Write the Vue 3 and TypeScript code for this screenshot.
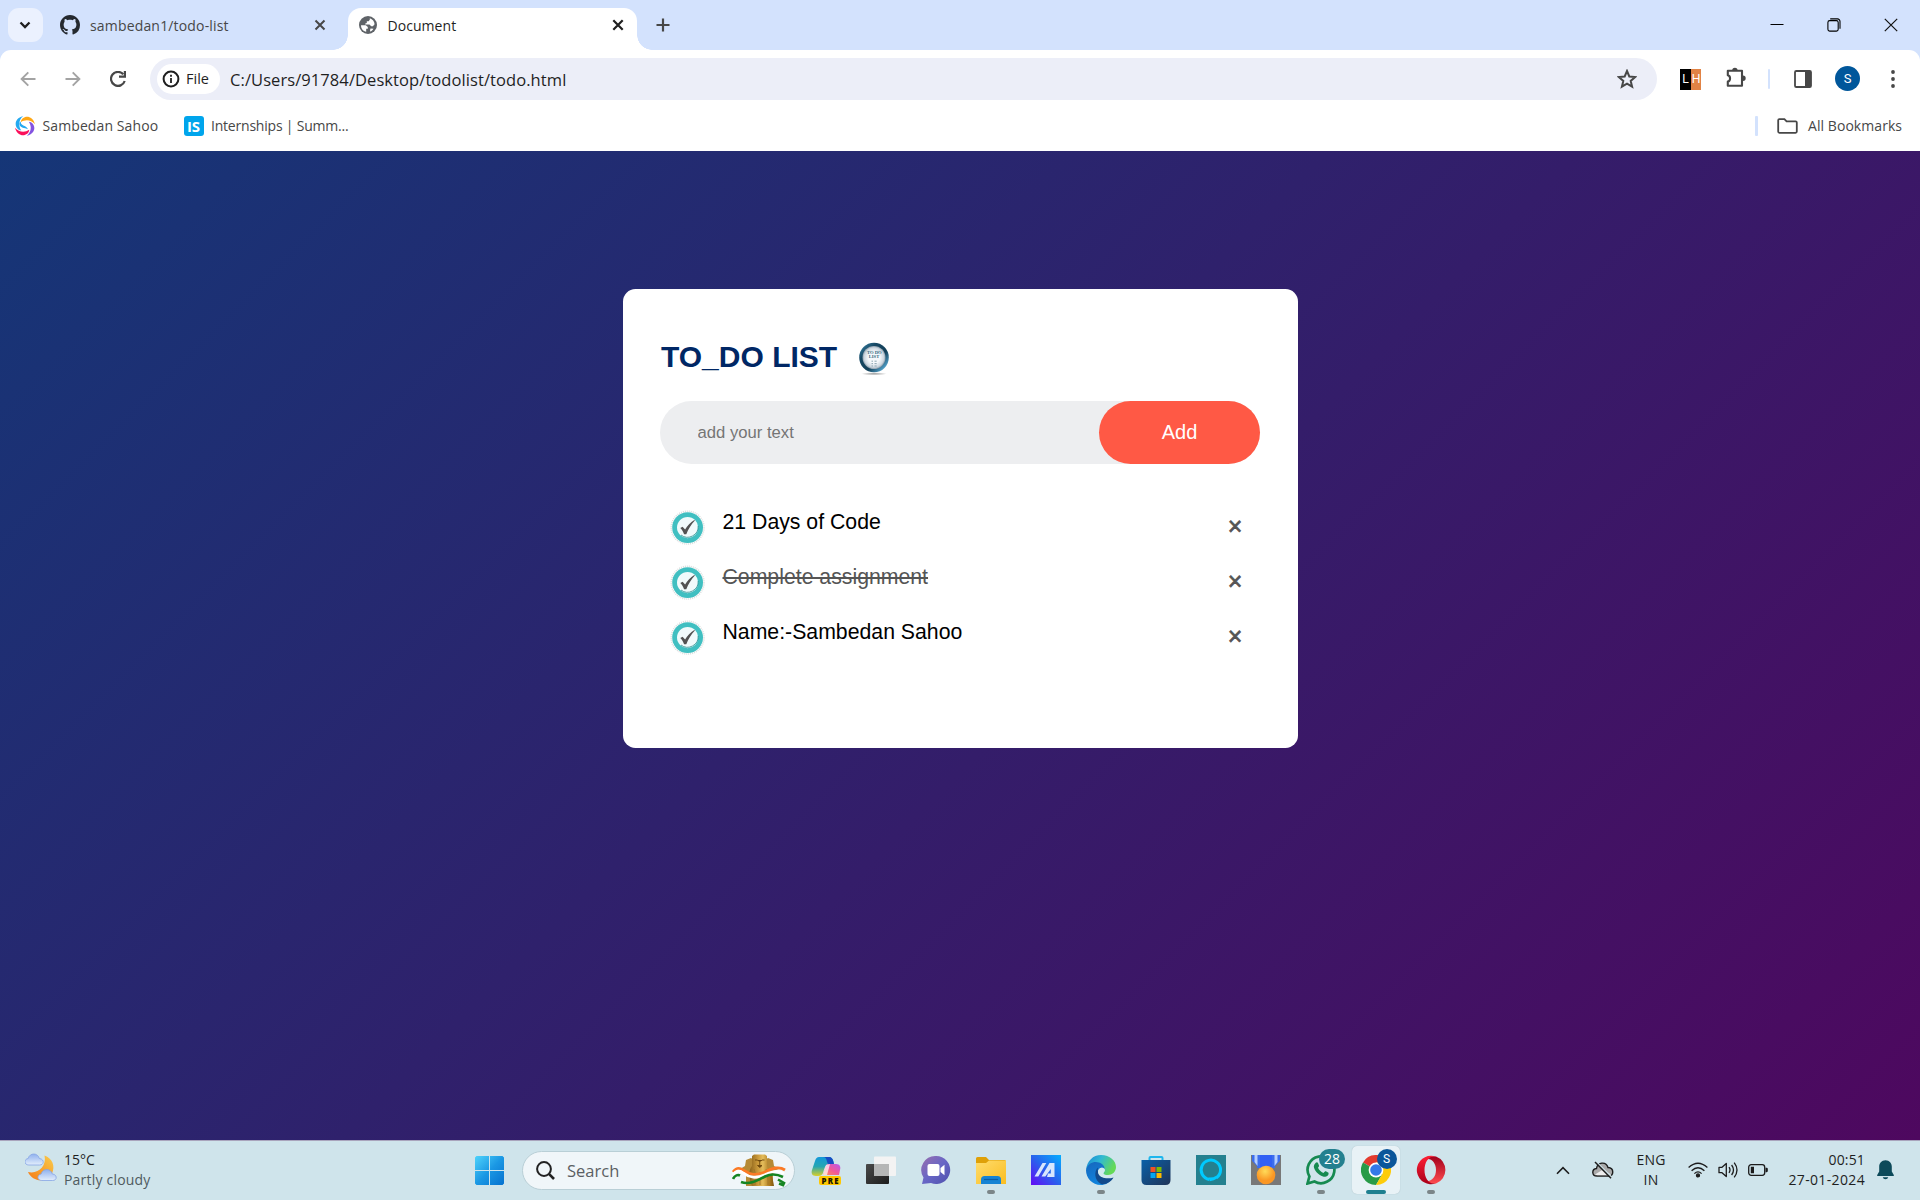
<script setup lang="ts">
import { ref } from 'vue'

interface Task {
  text: string
  done: boolean
}

const draft = ref('')
const tasks = ref<Task[]>([
  { text: '21 Days of Code', done: false },
  { text: 'Complete assignment', done: true },
  { text: 'Name:-Sambedan Sahoo', done: false },
])

function addTask() {
  const text = draft.value.trim()
  if (!text) return
  tasks.value.push({ text, done: false })
  draft.value = ''
}

function removeTask(index: number) {
  tasks.value.splice(index, 1)
}
</script>

<template>
  <div class="screen">
    <div class="tabstrip">
      <div class="tab-search">
        <svg width="12" height="8" viewBox="0 0 12 8"><path d="M1.500 1.500 6 6l4.500-4.500" fill="none" stroke="#1f1f1f" stroke-width="2.300" /></svg>
      </div>
      <div class="tab tab-idle">
        <svg class="fav" width="20" height="20" viewBox="0 0 16 16" fill="#24292f"><path d="M8 0C3.580 0 0 3.580 0 8c0 3.540 2.290 6.530 5.470 7.590.4.070.55-.17.55-.38 0-.19-.01-.82-.01-1.490-2.010.37-2.530-.49-2.690-.94-.09-.23-.48-.94-.82-1.130-.28-.15-.68-.52-.01-.53.63-.01 1.080.58 1.230.82.72 1.210 1.870.87 2.330.66.070-.52.28-.87.51-1.070-1.780-.2-3.640-.89-3.640-3.950 0-.87.31-1.590.82-2.150-.08-.2-.36-1.020.080-2.120 0 0 .67-.21 2.200.82.64-.18 1.320-.27 2-.27s1.360.090 2 .27c1.530-1.040 2.200-.82 2.200-.82.44 1.100.16 1.920.080 2.120.51.56.82 1.270.82 2.150 0 3.070-1.870 3.750-3.650 3.950.29.25.54.73.54 1.480 0 1.070-.01 1.930-.01 2.200 0 .21.15.46.55.38A8.010 8.010 0 0 0 16 8c0-4.420-3.580-8-8-8z" /></svg>
        <span class="tab-title idle-title">sambedan1/todo-list</span>
        <svg width="12" height="12" viewBox="0 0 12 12"><path d="m1.500 1.500 9 9m0-9-9 9" stroke="#474747" stroke-width="2" /></svg>
      </div>
      <div class="tab tab-active">
        <svg class="fav" width="18" height="18" viewBox="0 0 18 18"><circle cx="9" cy="9" r="9" fill="#5f6368" /><path d="M2 9.200h4.800l2 1.900v1.600H7.200v3.100C4.300 15.200 2 12.800 2 9.200zM10.800 2.300v1.500L9.600 5.200H7.800v1.900l-1.500.4v1h4.200l1.700 1.700h1.700l1.700-1.900c-.2-2.800-2-5-4.800-6zM11.500 12.500l3 .2c-.8 1.400-1.900 2.300-3.400 2.900v-1.500z" fill="#fff" /></svg>
        <span class="tab-title">Document</span>
        <svg width="12" height="12" viewBox="0 0 12 12"><path d="m1.300 1.300 9.400 9.400m0-9.400-9.400 9.400" stroke="#1f1f1f" stroke-width="2.200" /></svg>
      </div>
      <svg class="new-tab" width="14" height="14" viewBox="0 0 14 14"><path d="M7 .5v13M.5 7h13" stroke="#474747" stroke-width="2.200" /></svg>
      <div class="window-controls">
        <svg width="14" height="14" viewBox="0 0 14 14"><path d="M.5 6.500h13" stroke="#000" stroke-width="1" /></svg>
        <svg width="14" height="14" viewBox="0 0 14 14" fill="none" stroke="#000" stroke-width="1.100"><rect x=".9" y="2.600" width="10.300" height="10.500" rx="1.800" /><path d="M3.200.9h7.300a2.500 2.500 0 0 1 2.500 2.500v7.400" /></svg>
        <svg width="14" height="14" viewBox="0 0 14 14"><path d="m.8.800 12.400 12.400M13.200.8.8 13.200" stroke="#111" stroke-width="1.200" /></svg>
      </div>
    </div>

    <div class="toolbar">
      <svg class="nav" width="16" height="16" viewBox="0 0 16 16" fill="none" stroke="#a3a3a3" stroke-width="1.900"><path d="M15.500 8H2M8.300 1.300 1.600 8l6.700 6.700" /></svg>
      <svg class="nav" width="16" height="16" viewBox="0 0 16 16" fill="none" stroke="#a3a3a3" stroke-width="1.900"><path d="M.5 8H14M7.700 1.300 14.400 8l-6.700 6.700" /></svg>
      <svg class="nav" width="16" height="16" viewBox="0 0 16 16"><path d="M13.300 3.300A7 7 0 1 0 14.700 10" fill="none" stroke="#474747" stroke-width="2.200" /><path d="M9 6.800h7V0h-2.200v4.600H9z" fill="#474747" /></svg>
      <div class="omnibox">
        <div class="chip">
          <svg width="18" height="18" viewBox="0 0 18 18"><circle cx="9" cy="9" r="7.400" fill="none" stroke="#1f1f1f" stroke-width="2" /><path d="M9 8v5M9 4.800v2" stroke="#1f1f1f" stroke-width="1.800" /></svg>
          <span>File</span>
        </div>
        <span class="url">C:/Users/91784/Desktop/todolist/todo.html</span>
        <svg class="star" width="20" height="20" viewBox="0 0 20 20"><path d="m10 2 2.300 5.500 5.900.5-4.500 3.900 1.400 5.800-5.100-3.100-5.100 3.100 1.400-5.800L1.800 8l5.900-.5z" fill="none" stroke="#474747" stroke-width="2" /></svg>
      </div>
      <div class="ext"><span class="ext-l">L</span><span class="ext-h">H</span></div>
      <svg class="puzzle" width="22" height="22" viewBox="0 0 22 22"><path d="M2.800 3.800H17v15H2.800v-4.300c3-.6 3-5.600 0-6.200z" fill="none" stroke="#474747" stroke-width="2.100" stroke-linejoin="round" /><path d="M7.200 3.400a2.700 2.700 0 0 1 5.400 0zM18 8.600a2.700 2.700 0 0 1 0 5.400z" fill="#474747" /></svg>
      <i class="divider"></i>
      <svg class="panel" width="18" height="18" viewBox="0 0 18 18"><rect x="1" y="1" width="16" height="16" rx="1.300" fill="none" stroke="#474747" stroke-width="1.800" /><path d="M11 1h6v16h-6z" fill="#474747" /></svg>
      <span class="avatar">S</span>
      <svg class="dots" width="4" height="18" viewBox="0 0 4 18" fill="#474747"><circle cx="2" cy="2" r="1.900" /><circle cx="2" cy="9" r="1.900" /><circle cx="2" cy="16" r="1.900" /></svg>
    </div>

    <div class="bookmarks">
      <svg width="20" height="20" viewBox="0 0 20 20">
        <defs><path id="blade" d="M5.800 6.200C6 0 17-3 20 8.200 16 3.500 10 3.200 5.800 6.200z" /></defs>
        <use href="#blade" fill="#ffa714" />
        <use href="#blade" fill="#8353e0" transform="rotate(90 10 10)" />
        <use href="#blade" fill="#fb0f5a" transform="rotate(180 10 10)" />
        <use href="#blade" fill="#24a9f0" transform="rotate(270 10 10)" />
        <path d="M5.800 5.500c-.5 4.500 5 3.500 7.200 7.700-3-1.700-9.500-1-8.500-6.500z" fill="#24a9f0" />
      </svg>
      <span class="bm-one">Sambedan Sahoo</span>
      <span class="is-icon">IS</span>
      <span class="bm-two">Internships | Summ...</span>
      <i class="divider bm-divider"></i>
      <svg width="21" height="16" viewBox="0 0 21 16"><path d="M1.200 13.600V2.300c0-.8.400-1.200 1.200-1.200h5l2.200 2.300h9c.8 0 1.200.4 1.200 1.200v9c0 .8-.4 1.200-1.200 1.200H2.400c-.8 0-1.200-.4-1.200-1.200z" fill="none" stroke="#474747" stroke-width="1.800" /></svg>
      <span class="bm-all">All Bookmarks</span>
    </div>

    <main class="page">
      <section class="card">
        <h2>
          TO_DO LIST
          <svg width="38" height="38" viewBox="0 0 38 38">
            <defs>
              <linearGradient id="rim" x1="0" y1="0" x2="1" y2="1"><stop offset="0" stop-color="#3c88ae" /><stop offset=".3" stop-color="#174863" /><stop offset=".6" stop-color="#123f58" /><stop offset=".85" stop-color="#4f9cc4" /><stop offset="1" stop-color="#15425c" /></linearGradient>
              <radialGradient id="dial"><stop offset=".5" stop-color="#f5f8fb" /><stop offset=".85" stop-color="#ccd6df" /><stop offset="1" stop-color="#8d9eac" /></radialGradient>
              <radialGradient id="shade"><stop offset="0" stop-color="#999" /><stop offset="1" stop-color="#fff" /></radialGradient>
            </defs>
            <ellipse cx="18" cy="35.800" rx="13" ry="1.600" fill="url(#shade)" />
            <circle cx="18" cy="19.500" r="14.800" fill="url(#rim)" />
            <circle cx="18" cy="19.500" r="11.500" fill="url(#dial)" />
            <g fill="#33697e" font-family="Liberation Serif, serif" font-weight="bold" text-anchor="middle"><text x="18.300" y="15.500" font-size="4.600">TO DO</text><text x="18" y="20.100" font-size="4.600">LIST</text></g>
            <path d="M15.500 23.200h1.500m1.500 0h2.200m-5.200 2.400h1.500m1.500 0h2.200m-5.200 2.400h1.500m1.500 0h2.200" stroke="#8fa7b3" stroke-width="1" />
          </svg>
        </h2>
        <form class="row" @submit.prevent="addTask">
          <input v-model="draft" type="text" placeholder="add your text" />
          <button type="submit">Add</button>
        </form>
        <ul>
          <li v-for="(task, i) in tasks" :key="i" :class="{ done: task.done }" @click="task.done = !task.done">
            <svg class="check" width="35" height="35" viewBox="0 0 35 35">
              <circle cx="17.600" cy="17.600" r="16.400" fill="none" stroke="#d9dddd" stroke-width="1.600" stroke-dasharray="1 1" />
              <circle cx="17.600" cy="17.600" r="13" fill="#f1fafb" stroke="#40bfc1" stroke-width="4.800" />
              <path d="M11 25A10.700 10.700 0 0 0 28.200 16" fill="none" stroke="#2c9092" stroke-width=".8" />
              <path d="m10.300 18 2.300-1.300 2.500 2.800c2.300-3.700 5.300-7 9.200-9.500l.6.500c-3.700 4-6.700 8.700-8.600 13.700h-2.200c-.9-2.400-2.200-4.500-3.800-6.200z" fill="#525252" />
            </svg>
            <span class="label">{{ task.text }}</span>
            <span class="remove" @click.stop="removeTask(i)">×</span>
          </li>
        </ul>
      </section>
    </main>

    <footer class="taskbar">
      <div class="weather">
        <svg width="32" height="30" viewBox="0 0 32 30">
          <defs>
            <linearGradient id="moon" x1="1" y1="0" x2="0" y2="1"><stop offset="0" stop-color="#f9cd4c" /><stop offset="1" stop-color="#f57a16" /></linearGradient>
            <linearGradient id="cloud" x1="0" y1="0" x2="0" y2="1"><stop offset="0" stop-color="#8fb1ee" /><stop offset="1" stop-color="#e3eefc" /></linearGradient>
          </defs>
          <path d="M19.500 2.500c8 2.500 11 11 7.500 18-4.500 9.500-19.500 9-24-1.500 10 2.500 19-6 16.500-16.500z" fill="url(#moon)" />
          <path d="M3.800 12c-5 0-5-6-.6-6.500C4.500-.5 13-.5 14.300 5.500c5 .3 5.300 6.500.4 6.500z" fill="url(#cloud)" stroke="#87a5e4" stroke-width=".8" />
          <path d="M16.800 27.500c-5 0-5-6-.6-6.500 1.300-6 9.800-6 11.100 0 5 .3 5.300 6.500.4 6.500z" fill="url(#cloud)" stroke="#87a5e4" stroke-width=".8" />
        </svg>
        <div class="weather-text"><span>15°C</span><span class="cond">Partly cloudy</span></div>
      </div>

      <div class="start">
        <svg width="29" height="29" viewBox="0 0 29 29"><defs><linearGradient id="win" x1="0" y1="0" x2="1" y2="1"><stop offset="0" stop-color="#4fd3fb" /><stop offset=".5" stop-color="#1b98e4" /><stop offset="1" stop-color="#0571cf" /></linearGradient></defs><path d="M1.500 0H14v14H0V1.500zM15 0h12.500L29 1.500V14H15zM0 15h14v14H1.500L0 27.500zM15 15h14v12.500L27.500 29H15z" fill="url(#win)" /></svg>
      </div>
      <div class="search">
        <svg width="19" height="19" viewBox="0 0 19 19" fill="none" stroke="#222" stroke-width="2"><circle cx="8" cy="8" r="6.900" /><path d="m12.900 12.900 5.100 5.100" stroke-width="2.600" /></svg>
        <span>Search</span>
        <svg class="lions" width="54" height="33" viewBox="0 0 54 33">
          <defs><linearGradient id="gold" x1="0" y1="0" x2="1" y2="0"><stop offset="0" stop-color="#8a611a" /><stop offset=".35" stop-color="#cb9a3a" /><stop offset=".55" stop-color="#e4bd5c" /><stop offset=".8" stop-color="#b17f22" /><stop offset="1" stop-color="#80560f" /></linearGradient></defs>
          <path d="M14 32V17l-6-2 5-3 1-6 5-2 3 2V32zM41 32V17l6-2-5-3-1-6-5-2-3 2V32z" fill="#b58a35" />
          <path d="M20 32c-3-8-4-15 0-20V2l2-1.500h11L35 2v10c4 5 6 13 7 20z" fill="url(#gold)" />
          <path d="M23 6h2.500l1 1h2.500l1-1h2.500M27.700 7v4M25.500 11.500h4.500l-2.200 2z" fill="#6e480d" stroke="#6e480d" stroke-width=".9" />
          <path d="M22 15c2 4 1 10 1 16m11-16c2 4 2 10 2 16m-8-13v13" fill="none" stroke="#9c7028" stroke-width=".8" />
          <g fill="none" stroke-width="2.800"><path d="M1 18c3-4 6-5 10-2 7 5 13 6 22 2 8-4 14-6 20-2" stroke="#fb7a25" /><path d="M1 20.800c3-4 6-5 10-2 7 5 13 6 22 2 8-4 14-5 19-1" stroke="#fff" /><path d="M1 25c2-4 5-4.500 7-3.500m1 6.500c8 3 16-1 24-5.500 7-3.500 12-2.500 18 .5m-5 2.500 6 3.500-1 2-4-1.500" stroke="#168522" stroke-width="2.600" /></g>
        </svg>
      </div>

      <div class="apps">
        <div class="app">
          <svg width="30" height="30" viewBox="0 0 30 30">
            <defs><linearGradient id="cpa" x1="0" y1="0" x2="0" y2="1"><stop offset="0" stop-color="#1398d8" /><stop offset=".5" stop-color="#25a6b2" /><stop offset="1" stop-color="#d9cf29" /></linearGradient><linearGradient id="cpb" x1="1" y1="0" x2="0" y2="1"><stop offset="0" stop-color="#b958ee" /><stop offset=".5" stop-color="#f0589a" /><stop offset="1" stop-color="#ff9058" /></linearGradient></defs>
            <path d="M8 2h10c3 0 4 2 5 7h-5c-3 0-4 2-6 9-1 2-2 3-5 3H5c-4 0-5-3-4-6L4 6c1-3 2-4 4-4z" fill="url(#cpa)" /><path d="M15 2h3c3 0 4 2 5 7h-5c-3 0-1-7-6-7z" fill="#174cc2" /><path d="M18 9h7c4 0 5 3 4 6l-1 5H12l3-9c.5-1.500 1-2 3-2z" fill="url(#cpb)" /><path d="m15 10-3 10h4l3-11z" fill="#fff" opacity=".7" />
            <rect x="8" y="21" width="22" height="9" rx="2" fill="#ffc800" /><text x="19" y="28.500" text-anchor="middle" font-family="Open Sans, sans-serif" font-weight="800" font-size="7.800" textLength="17" fill="#1b1600">PRE</text>
          </svg>
        </div>
        <div class="app">
          <svg width="30" height="30" viewBox="0 0 30 30"><defs><linearGradient id="tv" x1="0" y1="0" x2="1" y2="1"><stop offset="0" stop-color="#4a4a4a" /><stop offset="1" stop-color="#1c1c1c" /></linearGradient></defs><rect x="0" y="9" width="23" height="20" rx="1" fill="url(#tv)" /><rect x="8" y="1.500" width="22" height="19.500" rx="1" fill="#f3f3f3" /><path d="M8 9h15v12H8z" fill="#b5b6b6" /></svg>
        </div>
        <div class="app">
          <svg width="30" height="30" viewBox="0 0 30 30"><defs><linearGradient id="chat" x1="0" y1="0" x2="1" y2="1"><stop offset="0" stop-color="#9a6fae" /><stop offset=".5" stop-color="#6866c6" /><stop offset="1" stop-color="#4f50ac" /></linearGradient></defs><path d="M15 1a14 14 0 1 1-5 27l-9 1 1.500-6.500A14 14 0 0 1 15 1z" fill="url(#chat)" /><rect x="6.500" y="9" width="12" height="12" rx="2" fill="#fff" /><path d="m19.500 13 4-3.300v10.600l-4-3.300z" fill="#fff" /></svg>
        </div>
        <div class="app">
          <svg width="30" height="30" viewBox="0 0 30 30"><defs><linearGradient id="folder" x1="0" y1="0" x2="1" y2="1"><stop offset="0" stop-color="#ffdc6d" /><stop offset="1" stop-color="#fabd21" /></linearGradient></defs><path d="M0 3.500Q0 2 1.500 2H10l3 3h15.500Q30 5 30 6.500V12H0z" fill="#dfa008" /><path d="M0 8h10l3-2.500h17V29H0z" fill="url(#folder)" /><path d="M5 29v-4.500Q5 21 8.500 21h13q3.500 0 3.500 3.500V29z" fill="#1683d4" /><path d="M8 24.500h14" stroke="#0c5da5" stroke-width="1.200" /></svg>
          <i class="dot"></i>
        </div>
        <div class="app">
          <svg width="30" height="30" viewBox="0 0 30 30"><defs><linearGradient id="asus" x1="0" y1="1" x2="1" y2="0"><stop offset="0" stop-color="#6409f5" /><stop offset=".5" stop-color="#2863ed" /><stop offset="1" stop-color="#05adff" /></linearGradient></defs><path d="M0 0h30v30H0z" fill="url(#asus)" /><path d="m3.500 21.500 8-13.500h3.800l-8 13.500zM10.500 21.500 18.500 8h5v14h-3.700V14l-5.500 7.500zM17 18.500h3V22h-4z" fill="#d8e6fd" /></svg>
        </div>
        <div class="app">
          <svg width="30" height="30" viewBox="0 0 30 30">
            <defs><linearGradient id="edge" x1="0" y1="0" x2="1" y2=".4"><stop offset="0" stop-color="#1684d7" /><stop offset=".5" stop-color="#31b9d2" /><stop offset="1" stop-color="#65d957" /></linearGradient><linearGradient id="edgeb" x1="0" y1="0" x2=".5" y2="1"><stop offset="0" stop-color="#1767bd" /><stop offset="1" stop-color="#0f85df" /></linearGradient></defs>
            <path d="M0 15C1 6 7 0 15 0c9 0 15 6 15 12 0 5-4 8-8 8-5 0-5-2-4-3 2-2 0-6-5-6C7 11 2 11 0 15z" fill="url(#edge)" /><path d="M0 15C2 7 9 6 13 7.500c4 1.500 6 4 5.500 7C16 11 12 13 12 17c0 6 7 9 14 6.500C23 28 19 30 15 30 6 30 0 23 0 15z" fill="url(#edgeb)" /><path d="M12 12.500C8 16 8 25 15 29c5 1 10-2 12.500-6.500C20 25 10 22 12 12.500z" fill="#124a8c" />
            <path d="M18 17c2-2 0-5-3-4-4 1.500-3.500 5.500-1 8 2.500 2 7 2.500 11-.5-7 .5-9-1.500-7-3.500z" fill="#d3eaf0" />
          </svg>
          <i class="dot"></i>
        </div>
        <div class="app">
          <svg width="30" height="30" viewBox="0 0 30 30"><defs><linearGradient id="store" x1="0" y1="0" x2="1" y2="1"><stop offset="0" stop-color="#0a60a9" /><stop offset="1" stop-color="#203457" /></linearGradient></defs><path d="M8.500 6V3q0-1 1-1h11q1 0 1 1v3" fill="none" stroke="#1fb6ed" stroke-width="2" /><path d="M.5 5h29v20q0 5-5 5h-19q-5 0-5-5z" fill="url(#store)" /><path d="M9.500 12h5v5h-5z" fill="#f15124" /><path d="M15.500 12h5v5h-5z" fill="#7fba00" /><path d="M9.500 18h5v5h-5z" fill="#05a6f0" /><path d="M15.500 18h5v5h-5z" fill="#ffb900" /></svg>
        </div>
        <div class="app">
          <svg width="30" height="30" viewBox="0 0 30 30"><path d="M0 0h30v30H0z" fill="#24808f" /><path d="M13.300 24.400A9.700 9.700 0 1 1 20.500 22.700" fill="none" stroke="#00caff" stroke-width="3" /><path d="M12.500 22.500q4.500.4 7.800-1.800l1.200 2.500Q18 25.500 13.800 26.200z" fill="#00caff" /></svg>
        </div>
        <div class="app">
          <svg width="30" height="30" viewBox="0 0 30 30"><defs><radialGradient id="medal" cx=".45" cy=".3"><stop offset="0" stop-color="#ffdb59" /><stop offset="1" stop-color="#fa9724" /></radialGradient></defs><path d="M0 0h30v30H0z" fill="#787878" /><path d="M1 0h28v6l-5 5v2H6v-2L1 6z" fill="#3b6dec" /><path d="M3.500 0v7l3 4V0M26.500 0v7l-3 4V0" fill="#b5cffe" /><path d="M9 0h12v12H9z" fill="#3160f4" /><circle cx="15" cy="20" r="9.300" fill="url(#medal)" /></svg>
        </div>
        <div class="app">
          <svg width="30" height="30" viewBox="0 0 30 30"><path d="m1.500 28.500 1.900-7A13.400 13.400 0 1 1 8.500 26.500z" fill="none" stroke="#168a50" stroke-width="2.700" /><path d="M9.500 8q1.500-1.500 2.500 0l1 2.500q.3.800-1 2.300c1.200 2.400 2.800 4 5.400 5.200 1.300-1.600 1.900-2 2.500-1.700l2.600 1.400c.7 3.200-3 4.500-5.500 3.800C12 20 8 15 7.800 11.500Q7.800 9.500 9.500 8z" fill="#168a50" /></svg>
          <b class="badge count">28</b>
          <i class="dot"></i>
        </div>
        <div class="app">
          <div class="hilite">
            <svg width="30" height="30" viewBox="0 0 30 30"><path d="M15 15 2 7.500A15 15 0 0 1 28 7.500H15z" fill="#e33b2e" /><path d="M15 15 2 7.500A15 15 0 0 0 15 30l6.500-11.200z" fill="#289b47" /><path d="M15 7.500h13A15 15 0 0 1 15 30l6.500-11.200z" fill="#fdcc0b" /><circle cx="15" cy="15" r="7.400" fill="#fff" /><circle cx="15" cy="15" r="5.800" fill="#3479e8" /></svg>
            <b class="badge profile">S</b>
          </div>
          <i class="dot wide"></i>
        </div>
        <div class="app">
          <svg width="30" height="30" viewBox="0 0 30 30"><defs><linearGradient id="opera" x1="0" y1="0" x2="0" y2="1"><stop offset="0" stop-color="#ff2035" /><stop offset="1" stop-color="#a8001a" /></linearGradient><linearGradient id="operab" x1="0" y1="0" x2="0" y2="1"><stop offset="0" stop-color="#a2001c" /><stop offset="1" stop-color="#ff4d50" /></linearGradient></defs><path d="M9 5q5-5 11-3.500a14.400 14.400 0 0 1 0 27Q14 30 9 25c5 3 11-2 11-10S14 2 9 5z" fill="url(#operab)" /><path d="M15 .8a14.200 14.200 0 1 0 5 27.500C13 30 8.500 23 8.500 15S13 0 20 1.700A14 14 0 0 0 15 .8z" fill="url(#opera)" /></svg>
          <i class="dot"></i>
        </div>
      </div>

      <div class="tray">
        <svg class="up" width="14" height="9" viewBox="0 0 14 9"><path d="m1 7.700 6-6 6 6" fill="none" stroke="#1c1c1c" stroke-width="1.600" /></svg>
        <svg class="onedrive" width="22" height="18" viewBox="0 0 22 18"><path d="M5 15c-5.500 0-5.500-7-.5-7.500C5.500 1 14 0 16 6.500c6.500.5 6 8.500.5 8.500z" fill="#aaa" stroke="#1c1c1c" stroke-width="1.400" /><path d="m3 13.500 8-5 8 5q-1 .8-2.500.8h-11Q4 14.300 3 13.500z" fill="#eee" /><path d="m4.800 1.200 14.500 14.500" stroke="#cfe4eb" stroke-width="1.500" /><path d="m3 1 16 16.300" stroke="#1c1c1c" stroke-width="1.500" /></svg>
        <div class="lang"><span>ENG</span><span>IN</span></div>
        <svg class="wifi" width="20" height="16" viewBox="0 0 20 16" fill="none" stroke="#1c1c1c" stroke-width="1.300"><path d="M.6 5.500q9.400-8.600 18.800 0M3.600 8.700q6.400-6 12.800 0M6.400 11.600q3.600-3.400 7.200 0" /><circle cx="10" cy="13.400" r="1.500" fill="#1c1c1c" /></svg>
        <svg class="sound" width="20" height="18" viewBox="0 0 20 18" fill="none" stroke="#1c1c1c" stroke-width="1.300"><path d="M1 6.300h3L8.300 2.400v13.200L4 11.700H1z" stroke-linejoin="round" /><path d="M11 6.200q2 2.800 0 5.600M13.600 4q3.800 5 0 10M16.200 1.600q5.600 7.400 0 14.800" /></svg>
        <svg class="battery" width="20" height="12" viewBox="0 0 20 12"><rect x=".7" y=".7" width="16" height="10.600" rx="2.500" fill="none" stroke="#1c1c1c" stroke-width="1.300" /><path d="M2.800 2.800H6v6.400H2.800zM17.500 3.800h1.200q1.100 0 1.100 1.100v2.200q0 1.100-1.100 1.100h-1.200z" fill="#1c1c1c" /></svg>
        <div class="clock"><span>00:51</span><span class="date">27-01-2024</span></div>
        <svg class="bell" width="17" height="20" viewBox="0 0 17 20"><path d="M8.500.3c4 0 6.300 3 6.300 6.500v4.700l2 3.600v.9H.2v-.9l2-3.600V6.800C2.200 3.300 4.500.3 8.500.3zM5.800 17.300h5.400c-.5 2.600-4.900 2.600-5.400 0z" fill="#0d4a5a" /></svg>
      </div>
    </footer>
  </div>
</template>

<style>
body {
  margin: 0;
  overflow: hidden;
}
</style>

<style scoped>
* {
  box-sizing: border-box;
}
svg {
  display: block;
  flex: none;
}
.screen {
  width: 1920px;
  height: 1200px;
  display: flex;
  flex-direction: column;
  font-family: 'Open Sans', 'Noto Sans', sans-serif;
  font-size: 14px;
  color: #1f1f1f;
  white-space: nowrap;
  background: #d3e2fd;
}
.tabstrip {
  height: 50px;
  flex: none;
  display: flex;
  align-items: center;
}
.tab-search {
  width: 35px;
  height: 34px;
  margin-left: 8px;
  border-radius: 11px;
  background: #ebf1fe;
  display: grid;
  place-items: center;
}
.tab-search svg {
  margin-right: 1px;
}
.tab {
  display: flex;
  align-items: center;
}
.tab-idle {
  width: 305px;
  padding: 0 22px 0 17px;
}
.tab-title {
  flex: 1;
  margin-left: 10.500px;
  letter-spacing: 0.05px;
}
.idle-title {
  margin-left: 10px;
  color: #474747;
  letter-spacing: 0.17px;
}
.tab-active {
  position: relative;
  width: 289px;
  height: 42px;
  margin-top: 8px;
  padding: 0 13.500px 8px 11px;
  border-radius: 13px 13px 0 0;
  background: #fff;
}
.tab-active::before,
.tab-active::after {
  content: '';
  position: absolute;
  bottom: 0;
  width: 15px;
  height: 15px;
}
.tab-active::before {
  left: -15px;
  background: radial-gradient(circle at 0 0, transparent 14.5px, #fff 15px);
}
.tab-active::after {
  right: -15px;
  background: radial-gradient(circle at 100% 0, transparent 14.5px, #fff 15px);
}
.new-tab {
  margin-left: 18.500px;
}
.window-controls {
  margin-left: auto;
  padding-right: 22px;
  display: flex;
  gap: 43px;
}
.toolbar {
  height: 57px;
  flex: none;
  display: flex;
  align-items: center;
  padding-left: 19.500px;
  background: #fff;
  border-radius: 11px 11px 0 0;
}
.nav {
  margin-right: 29px;
}
.omnibox {
  width: 1507px;
  height: 42px;
  margin-left: -4.500px;
  padding: 0 20px 0 7px;
  border-radius: 21px;
  background: #eceef8;
  display: flex;
  align-items: center;
}
.chip {
  width: 63px;
  height: 30px;
  padding-left: 5px;
  border-radius: 15px;
  background: #fff;
  display: flex;
  align-items: center;
  gap: 6px;
  font-size: 14.500px;
}
.url {
  flex: 1;
  margin: 1px 0 0 10px;
  font-size: 16.500px;
  letter-spacing: 0.08px;
}
.ext {
  width: 21px;
  height: 21px;
  margin-left: 23px;
  margin-top: 1px;
  display: flex;
  font: 12px/21px 'Liberation Sans', sans-serif;
  color: #fff;
  text-align: center;
}
.ext-l {
  width: 11px;
  background: #000;
}
.ext-h {
  width: 10px;
  background: #e18345;
}
.puzzle {
  margin-left: 24px;
  margin-bottom: 1px;
}
.divider {
  width: 2px;
  height: 20px;
  margin-left: 21px;
  border-radius: 1px;
  background: #d3e2fd;
}
.panel {
  margin-left: 23.500px;
  margin-top: 1px;
}
.avatar {
  width: 25px;
  height: 25px;
  margin-left: 23.500px;
  border-radius: 50%;
  background: #00579b;
  color: #fff;
  font: 13px/25px Roboto, sans-serif;
  text-align: center;
}
.dots {
  margin-left: 30.500px;
}
.bookmarks {
  height: 44px;
  flex: none;
  display: flex;
  align-items: center;
  padding: 0 18px 6px 15px;
  background: #fff;
  color: #474747;
}
.bm-one,
.bm-two,
.bm-all {
  margin-top: -2px;
}
.bm-one {
  width: 141px;
  margin-left: 7.500px;
  letter-spacing: 0.1px;
}
.is-icon {
  width: 20px;
  height: 20px;
  border-radius: 3px;
  background: #00a5ec;
  color: #fff;
  font: bold 15px/20px 'Open Sans', sans-serif;
  text-align: center;
}
.bm-two {
  margin-left: 7.500px;
  letter-spacing: -0.21px;
}
.bm-divider {
  width: 3px;
  margin-left: auto;
  margin-right: 19px;
}
.bm-all {
  width: 94px;
  margin-left: 10px;
  letter-spacing: 0.06px;
}
.page {
  flex: 1;
  padding-top: 138px;
  display: flex;
  justify-content: center;
  align-items: flex-start;
  background: linear-gradient(135deg, #153677, #4e085f);
  font-family: 'Liberation Sans', Arial, sans-serif;
}
.card {
  width: 675px;
  height: 459px;
  padding: 49px 37.500px 0;
  border-radius: 12.500px;
  background: #fff;
}
h2 {
  height: 38px;
  margin: 0 0 25px 1px;
  padding-bottom: 1px;
  display: flex;
  align-items: center;
  gap: 19px;
  font-size: 30px;
  color: #002765;
}
.row {
  height: 63px;
  display: flex;
  border-radius: 32px;
  background: #edeef0;
}
.row input {
  flex: 1;
  min-width: 0;
  padding: 0 0 0 37.500px;
  border: 0;
  outline: 0;
  background: transparent;
  font: 16.670px 'Liberation Sans', Arial, sans-serif;
}
.row input::placeholder {
  color: #757575;
}
.row button {
  width: 161px;
  padding: 0;
  border: 0;
  border-radius: 32px;
  background: #ff5945;
  color: #fff;
  font: 20px 'Liberation Sans', Arial, sans-serif;
}
ul {
  margin: 31px 0 0;
  padding: 0;
  list-style: none;
}
li {
  height: 55px;
  display: flex;
  align-items: flex-start;
  padding: 15px 10px 0;
  font-size: 21.250px;
  line-height: 24px;
  color: #000;
}
.label {
  flex: 1;
  margin: 0 0 0 17.500px;
}
.done .label {
  color: #555;
  text-decoration: line-through;
}
.remove {
  width: 30px;
  font-size: 25px;
  line-height: 32px;
  text-align: center;
  color: #555;
  -webkit-text-stroke: 0.7px #555;
}
.taskbar {
  height: 60px;
  flex: none;
  display: flex;
  align-items: center;
  padding-bottom: 1px;
  border-top: 1px solid #a9a5bd;
  background: #cfe4eb;
}
.weather {
  width: 462px;
  display: flex;
  padding-left: 25px;
  align-items: center;
}
.weather svg {
  margin-top: -4px;
}
.weather-text,
.lang,
.clock {
  display: flex;
  flex-direction: column;
  line-height: 20px;
}
.weather-text {
  margin-left: 7px;
}
.cond {
  color: #4f5b60;
  letter-spacing: 0.2px;
}
.start {
  width: 60px;
  padding-left: 13px;
}
.search {
  width: 273px;
  height: 39px;
  padding: 0 8px 0 13px;
  display: flex;
  align-items: center;
  border: 1px solid #b9cfd6;
  border-radius: 20px;
  background: #f0f6f9;
  font-size: 16.500px;
  color: #5b6063;
}
.search span {
  flex: 1;
  margin-left: 12px;
}
.apps {
  display: flex;
  margin-left: 3px;
}
.app {
  position: relative;
  width: 55px;
  height: 58px;
  display: grid;
  place-items: center;
}
.dot {
  position: absolute;
  left: 24px;
  bottom: 5px;
  width: 8px;
  height: 4px;
  border-radius: 2px;
  background: #7b8588;
}
.wide {
  left: 18px;
  width: 20px;
  background: #1f8090;
}
.hilite {
  position: relative;
  width: 48px;
  height: 48px;
  border-radius: 5px;
  background: #e8f2f6;
  box-shadow: 0 0 1px #9fb4bb;
  display: grid;
  place-items: center;
}
.badge {
  position: absolute;
  border-radius: 10px;
  color: #fff;
  font-weight: 400;
  text-align: center;
}
.count {
  left: 26px;
  top: 8px;
  width: 26px;
  height: 20px;
  background: #24808f;
  line-height: 20px;
}
.profile {
  right: 3px;
  top: 3px;
  width: 20px;
  height: 20px;
  background: #0b569a;
  font: 12px/20px Roboto, sans-serif;
}
.tray {
  margin-left: auto;
  padding-right: 26px;
  display: flex;
  align-items: center;
}
.onedrive {
  margin-left: 22px;
}
.lang {
  width: 40px;
  margin-left: 17px;
  text-align: center;
  letter-spacing: 0.2px;
}
.wifi {
  margin-left: 17px;
}
.sound {
  margin-left: 10px;
}
.battery {
  margin-left: 10px;
}
.clock {
  width: 97px;
  align-items: flex-end;
  letter-spacing: 0.15px;
}
.date {
  letter-spacing: 0.35px;
}
.bell {
  margin-left: 12px;
}
</style>
